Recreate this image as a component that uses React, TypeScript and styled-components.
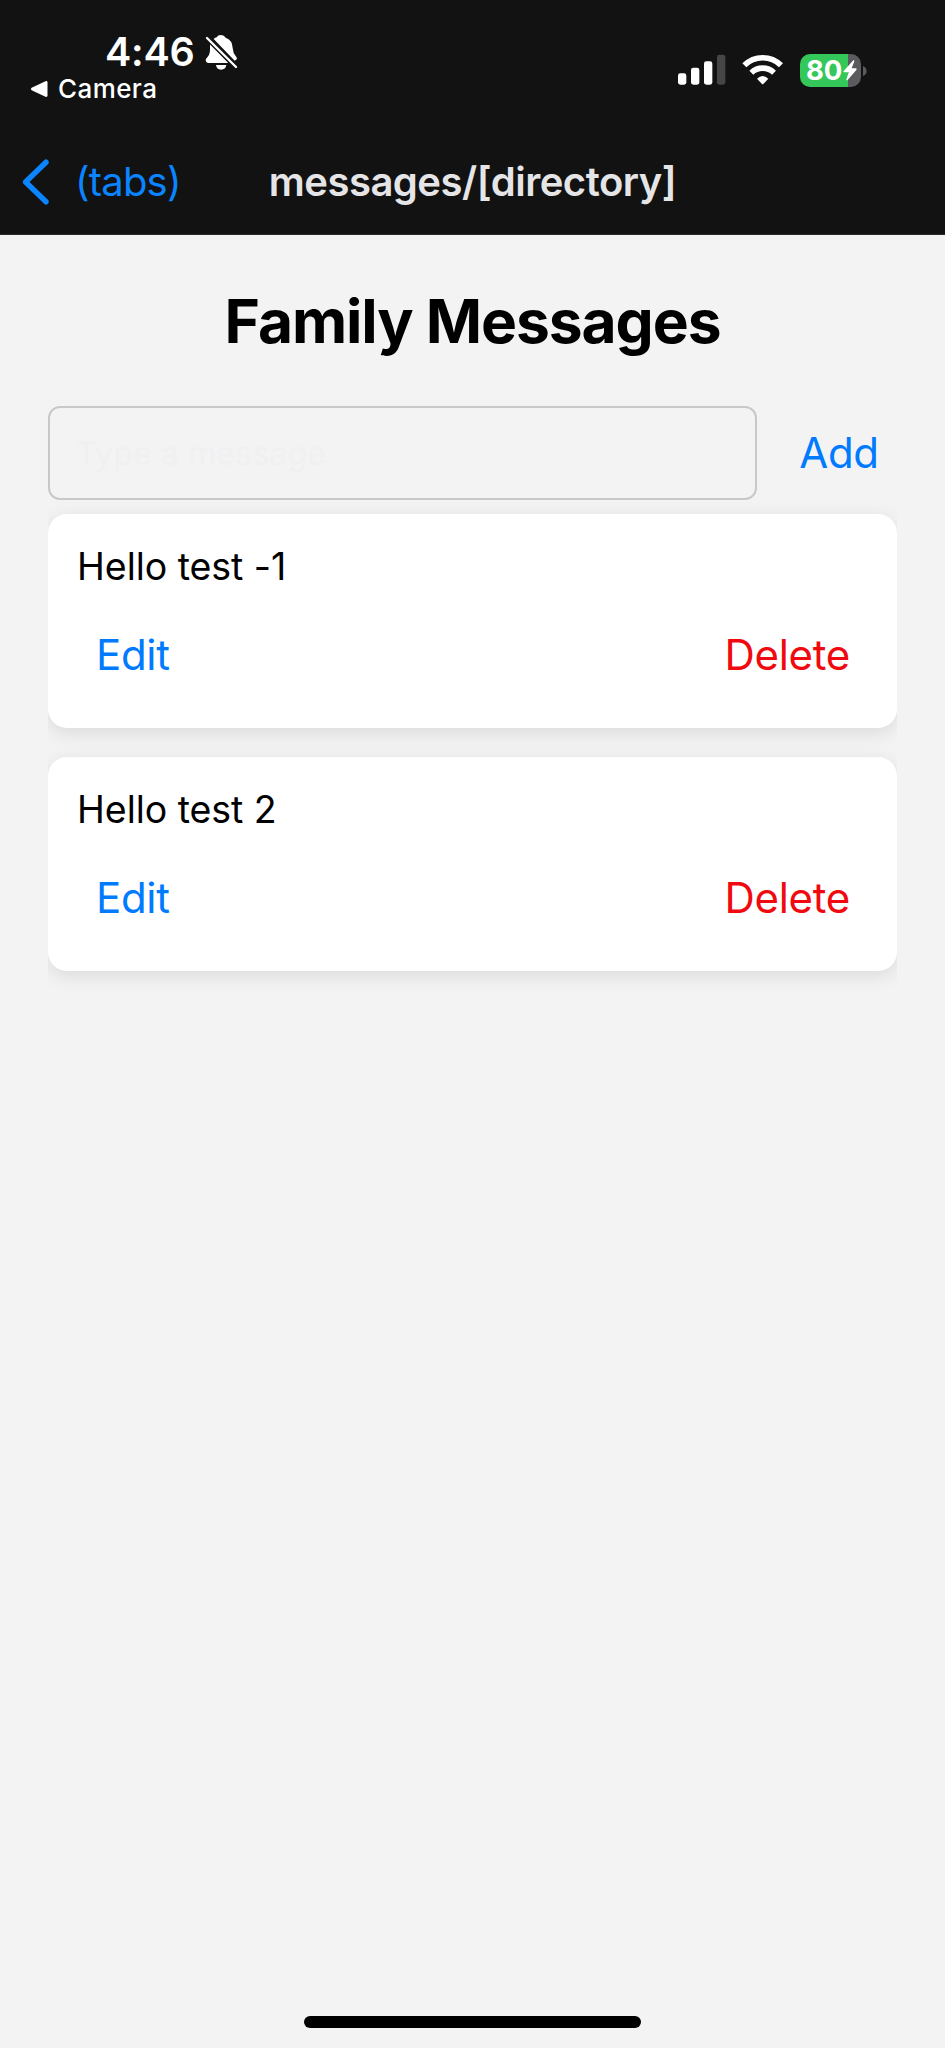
import React from "react";
import styled, { createGlobalStyle } from "styled-components";

const GlobalStyle = createGlobalStyle`
  * { box-sizing: border-box; }
  body {
    margin: 0;
    background: #f3f3f3;
    font-family: Inter, "Liberation Sans", sans-serif;
  }
`;

const Screen = styled.div`
  display: flex;
  flex-direction: column;
  width: 945px;
  height: 2048px;
  background: #f3f3f3;
  overflow: hidden;
`;

const StatusBar = styled.div`
  display: flex;
  justify-content: space-between;
  height: 131px;
  padding: 30px 78px 0 30px;
  background: #121212;
  color: #fff;
`;

const StatusLeft = styled.div`
  display: flex;
  flex-direction: column;
`;

const TimeRow = styled.div`
  display: flex;
  align-items: center;
  gap: 10px;
  height: 44px;
  padding-left: 75px;
  font-size: 39.5px;
  font-weight: 600;
  line-height: 44px;
  letter-spacing: -0.2px;
`;

const ReturnRow = styled.div`
  display: flex;
  align-items: center;
  gap: 10px;
  font-size: 26px;
  font-weight: 500;
  line-height: 30px;
  letter-spacing: 0.4px;
`;

const StatusRight = styled.div`
  display: flex;
  align-items: flex-start;
  padding-top: 24px;
`;

const WifiIcon = styled.svg`
  margin: 0 16px;
`;

const Battery = styled.div`
  display: flex;
  align-items: center;
  gap: 2px;
`;

const BatteryBody = styled.div`
  display: flex;
  align-items: center;
  justify-content: center;
  gap: 1px;
  width: 61px;
  height: 33px;
  padding-left: 2px;
  border-radius: 10px;
  background: linear-gradient(to right, #34c759 79%, #5b5b5f 79%);
  font-size: 27.5px;
  font-weight: 700;
  line-height: 33px;
  letter-spacing: -0.2px;
`;

const NavBar = styled.div`
  display: grid;
  grid-template-columns: 1fr auto 1fr;
  align-items: center;
  height: 104px;
  padding: 0 22px 2px;
  border-bottom: 1px solid #2c292a;
  background: #121212;
  font-size: 40px;
  line-height: 48px;
`;

const BackButton = styled.div`
  display: flex;
  align-items: center;
  gap: 25px;
  color: #0a84ff;
  letter-spacing: -0.8px;
`;

const NavTitle = styled.div`
  color: #e5e5e7;
  font-weight: 600;
  letter-spacing: -0.5px;
`;

const Content = styled.main`
  flex: 1;
  display: flex;
  flex-direction: column;
  padding: 48px 48px 0;
`;

const Heading = styled.h1`
  margin: 0 0 47px;
  font-size: 60.5px;
  font-weight: 700;
  line-height: 76px;
  letter-spacing: -1.1px;
  text-align: center;
  color: #000;
`;

const Composer = styled.div`
  display: flex;
  align-items: center;
  height: 94px;
`;

const MessageInput = styled.input`
  width: 709px;
  height: 94px;
  padding: 0 26px;
  border: 2px solid #c8c8c8;
  border-radius: 12px;
  background: transparent;
  font: 400 32.5px Inter, sans-serif;
  letter-spacing: -0.1px;
  outline: none;
  &::placeholder {
    color: #f0f0f2;
    opacity: 1;
  }
`;

const TextButton = styled.button<{ $danger?: boolean }>`
  padding: 0;
  border: 0;
  background: none;
  font: 400 42px/50px Inter, sans-serif;
  letter-spacing: -0.3px;
  color: ${(p) => (p.$danger ? "#f00a0f" : "#007aff")};
`;

const AddSlot = styled.div`
  display: flex;
  flex: 1;
  justify-content: center;
  padding: 0 0 1px 24px;
`;

const List = styled.div`
  display: flex;
  flex: 1;
  flex-direction: column;
  gap: 29px;
  padding-top: 14px;
  overflow: hidden;
`;

const Card = styled.article`
  height: 214px;
  padding: 30px 29px 0;
  border-radius: 19px;
  background: #fff;
  box-shadow: 0 5px 19px rgba(0, 0, 0, 0.1);
`;

const Message = styled.p`
  margin: 0 0 40px;
  font-size: 37.5px;
  line-height: 46px;
  letter-spacing: -0.05px;
  color: #000;
`;

const Actions = styled.div`
  display: flex;
  justify-content: space-between;
  padding: 0 18px 0 19px;
`;

const HomeArea = styled.div`
  display: flex;
  justify-content: center;
  height: 32px;
`;

const HomeIndicator = styled.div`
  width: 337px;
  height: 12px;
  border-radius: 6px;
  background: #000;
`;

const BellOff = () => (
  <svg width="33" height="36" viewBox="615 42 99 108" fill="#fff">
    <path d="M641 57 Q646 53 650 52 Q653 45 663 45 Q673 45 677 53 Q697 60 698 84 Q699 99 707 108 Q711 112 711 117 L704 122 Z" />
    <path d="M630 70 L685 129 L624 129 Q617 128 617 121 Q617 117 622 112 Q630 104 630 88 Z" />
    <path d="M648 135 H679 Q677 149 663 149 Q650 149 648 135 Z" />
    <path d="M621 54 L708 141" stroke="#121212" strokeWidth="15" />
    <path d="M621 54 L708 141" stroke="#fff" strokeWidth="7" strokeLinecap="round" />
  </svg>
);

const Signal = () => (
  <svg width="48" height="32" viewBox="53 43 144 96" fill="#fff">
    <rect x="53" y="101" width="25" height="34" rx="7" />
    <rect x="92" y="84" width="25" height="51" rx="7" />
    <rect x="131" y="65" width="25" height="70" rx="7" />
    <rect x="170" y="45" width="25" height="90" rx="7" fill="#464646" />
  </svg>
);

const Wifi = () => (
  <WifiIcon width="42" height="32" viewBox="246 43 126 96" fill="none" stroke="#fff">
    <path d="M253 77 A78 78 0 0 1 363 77" strokeWidth="17" />
    <path d="M274 99 A49 49 0 0 1 342 99" strokeWidth="17" />
    <path d="M291 117 Q308 101 325 117 L310 133 Q308 135 306 133 Z" fill="#fff" stroke="none" />
  </WifiIcon>
);

const messages = ["Hello test -1", "Hello test 2"];

export default function App() {
  return (
    <Screen>
      <GlobalStyle />
      <StatusBar>
        <StatusLeft>
          <TimeRow>
            4:46
            <BellOff />
          </TimeRow>
          <ReturnRow>
            <svg width="18" height="18" viewBox="0 0 18 18" fill="#fff">
              <path d="M1.6 7.8 L15.5 1.2 Q17.5 0.6 17.5 2.5 V15.5 Q17.5 17.4 15.5 16.8 L1.6 10.2 Q0 9 1.6 7.8 Z" />
            </svg>
            Camera
          </ReturnRow>
        </StatusLeft>
        <StatusRight>
          <Signal />
          <Wifi />
          <Battery>
            <BatteryBody>
              80
              <svg width="14" height="21" viewBox="551 63 42 63" fill="#fff">
                <path d="M582 64 L553 96 Q551 100 556 100 H568 L561 122 Q561 126 565 123 L591 93 Q594 88 588 88 H577 L585 67 Q585 63 582 64 Z" />
              </svg>
            </BatteryBody>
            <svg width="4" height="10" viewBox="0 0 4 10" fill="#5b5b5f">
              <path d="M0 0 Q3.6 1.5 3.6 5 Q3.6 8.5 0 10 Z" />
            </svg>
          </Battery>
        </StatusRight>
      </StatusBar>
      <NavBar>
        <BackButton>
          <svg width="28" height="46" viewBox="0 0 28 46" fill="none" stroke="#0a84ff" strokeWidth="5.4" strokeLinecap="round" strokeLinejoin="round">
            <path d="M24 3.2 L3.6 23 L24 42.8" />
          </svg>
          (tabs)
        </BackButton>
        <NavTitle>messages/[directory]</NavTitle>
      </NavBar>
      <Content>
        <Heading>Family Messages</Heading>
        <Composer>
          <MessageInput placeholder="Type a message" />
          <AddSlot>
            <TextButton>Add</TextButton>
          </AddSlot>
        </Composer>
        <List>
          {messages.map((text) => (
            <Card key={text}>
              <Message>{text}</Message>
              <Actions>
                <TextButton>Edit</TextButton>
                <TextButton $danger>Delete</TextButton>
              </Actions>
            </Card>
          ))}
        </List>
      </Content>
      <HomeArea>
        <HomeIndicator />
      </HomeArea>
    </Screen>
  );
}
